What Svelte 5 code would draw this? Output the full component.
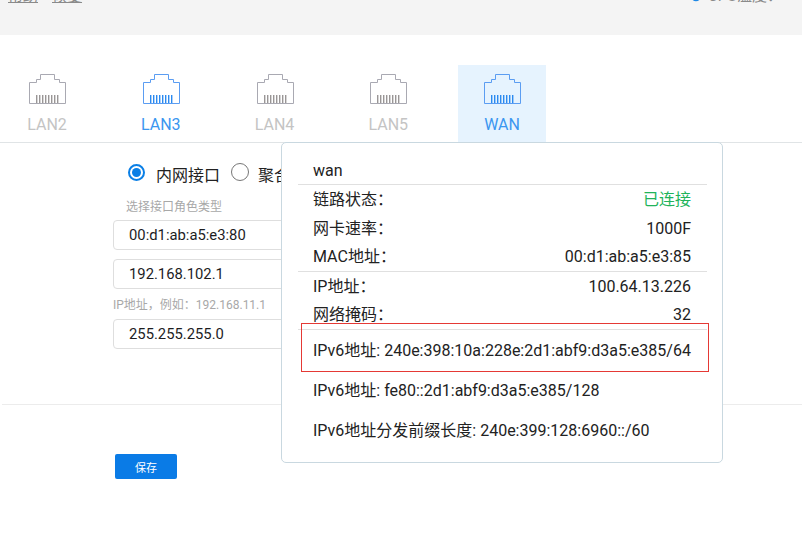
<script>
  const tabs = [
    { name: "LAN2", state: "off" },
    { name: "LAN3", state: "on" },
    { name: "LAN4", state: "off" },
    { name: "LAN5", state: "off" },
    { name: "WAN", state: "current" },
  ];
  const pins = [0, 1, 2, 3, 4, 5, 6, 7];
  const link = [
    { label: "链路状态：", value: "已连接", ok: true },
    { label: "网卡速率：", value: "1000F" },
    { label: "MAC地址：", value: "00:d1:ab:a5:e3:85" },
  ];
  const net = [
    { label: "IP地址：", value: "100.64.13.226" },
    { label: "网络掩码：", value: "32" },
  ];
</script>

<div class="page">
  <header class="top">
    <div class="links"><u>帮助</u><u>恢复</u></div>
    <div class="temp">
      <svg width="12" height="12" viewBox="0 0 12 12"><circle cx="6" cy="6" r="4.5" fill="none" stroke="#1e88e5" stroke-width="1.4" /><circle cx="6" cy="6" r="1.6" fill="#1e88e5" /></svg>
      <span>CPU温度：</span>
    </div>
  </header>

  <nav class="tabs">
    {#each tabs as t}
      <div class="tab {t.state}">
        <svg width="38" height="31" viewBox="0 0 38 31" fill="none">
          <path d="M1.5 30.5 V9.5 H8.5 V6.5 H12.5 V1.5 H26.5 V6.5 H31.5 V9.5 H37.5 V30.5 Z" class="outline" />
          {#each pins as p}
            <rect x={8 + p * 3} y="22" width="1.4" height="8" class="pin" />
          {/each}
        </svg>
        <span>{t.name}</span>
      </div>
    {/each}
  </nav>

  <section class="form">
    <div class="radios">
      <span class="radio checked"></span><span class="opt">内网接口</span>
      <span class="radio"></span><span class="opt">聚合接口</span>
    </div>
    <p class="hint role">选择接口角色类型</p>
    <div class="input">00:d1:ab:a5:e3:80</div>
    <div class="input second">192.168.102.1</div>
    <p class="hint ip">IP地址，例如：192.168.11.1</p>
    <div class="input">255.255.255.0</div>
  </section>

  <div class="actions">
    <button>保存</button>
  </div>

  <aside class="pop">
    <div class="title">wan</div>
    <div class="group">
      {#each link as r}
        <div class="row"><span>{r.label}</span><span class:ok={r.ok}>{r.value}</span></div>
      {/each}
    </div>
    <div class="group">
      {#each net as r}
        <div class="row"><span>{r.label}</span><span>{r.value}</span></div>
      {/each}
    </div>
    <div class="v6 mark">IPv6地址: 240e:398:10a:228e:2d1:abf9:d3a5:e385/64</div>
    <div class="v6">IPv6地址: fe80::2d1:abf9:d3a5:e385/128</div>
    <div class="v6">IPv6地址分发前缀长度: 240e:399:128:6960::/60</div>
  </aside>
</div>

<style>
  :global(body) {
    margin: 0;
    background: #fff;
  }
  .page {
    position: relative;
    width: 802px;
    height: 541px;
    overflow: hidden;
    font-family: Roboto, "Noto Sans CJK SC", sans-serif;
    color: #222;
  }
  .top {
    height: 35px;
    background: #f4f4f4;
    display: flex;
    justify-content: space-between;
    align-items: flex-start;
    font-size: 15px;
    line-height: 16px;
    color: #8a8a8a;
  }
  .links {
    display: flex;
    gap: 14px;
    margin: -12px 0 0 8px;
  }
  .temp {
    display: flex;
    align-items: center;
    gap: 6px;
    margin: -12px 0 0 0;
    width: 112px;
    white-space: nowrap;
  }
  .tabs {
    display: flex;
    gap: 25.75px;
    margin-top: 30px;
    padding-left: 3px;
    height: 77px;
    border-bottom: 1px solid #e0e4e6;
  }
  .tab {
    width: 88px;
    flex: none;
    display: flex;
    flex-direction: column;
    align-items: center;
    padding-top: 8px;
    box-sizing: border-box;
    color: #c4c4c4;
  }
  .tab svg {
    display: block;
    margin-bottom: 12px;
  }
  .tab span {
    line-height: 18px;
    font-size: 16px;
  }
  .outline {
    stroke: #a9a9b2;
    stroke-width: 1;
  }
  .pin {
    fill: #9a9696;
  }
  .on,
  .current {
    color: #3a96f0;
  }
  .current {
    background: #e6f3fe;
  }
  .on .outline,
  .current .outline {
    stroke: #5b9df2;
  }
  .on .pin,
  .current .pin {
    fill: #2b8af0;
  }
  .form {
    padding: 20px 0 0 113px;
    width: 300px;
  }
  .radios {
    display: flex;
    align-items: center;
    height: 20px;
    padding-left: 15px;
    white-space: nowrap;
  }
  .radio {
    width: 16px;
    height: 16px;
    border: 1px solid #777;
    border-radius: 50%;
    margin-top: -2px;
    flex: none;
  }
  .radio.checked {
    width: 9px;
    height: 9px;
    border: 2px solid #0a7fe6;
    padding: 2px;
    background: #0a7fe6;
    background-clip: content-box;
  }
  .opt {
    margin: 2px 11px 0 11px;
    font-size: 16px;
    color: #222;
  }
  .radio:not(.checked) + .opt {
    margin-left: 9px;
  }
  .hint {
    margin: 0;
    font-size: 12px;
    line-height: 16px;
    color: #a8a8a8;
  }
  .role {
    margin: 16px 0 5px 13px;
  }
  .ip {
    margin: 8px 0 6px;
  }
  .input {
    height: 28px;
    line-height: 28px;
    width: 300px;
    padding-left: 15px;
    border: 1px solid #dedede;
    border-radius: 4px;
    background: #fff;
    font-size: 14.8px;
    color: #1d1d1f;
  }
  .second {
    margin-top: 9px;
  }
  .actions {
    margin: 55px 0 0 2px;
    height: 49px;
    border-top: 1px solid #ececec;
    padding: 49px 0 0 113px;
  }
  button {
    display: block;
    width: 62px;
    height: 25px;
    border: 0;
    border-radius: 2px;
    background: #0a7be6;
    color: #fff;
    font: 11px "Noto Sans CJK SC", sans-serif;
    padding: 0;
  }
  .pop {
    position: absolute;
    left: 281px;
    top: 142px;
    width: 442px;
    height: 321px;
    box-sizing: border-box;
    background: #fff;
    border: 1px solid #c9d8e0;
    border-radius: 5px;
    padding: 15px 15px 0 16px;
    font-size: 16px;
    color: #222;
  }
  .title {
    height: 26px;
    line-height: 26px;
    padding-left: 15px;
    border-bottom: 1px solid #e0e0e0;
  }
  .group {
    border-bottom: 1px solid #e0e0e0;
    padding: 0 16px 0 15px;
  }
  .row {
    display: flex;
    justify-content: space-between;
    height: 28.5px;
    line-height: 30px;
    white-space: nowrap;
  }
  .ok {
    color: #21b35a;
  }
  .v6 {
    height: 40px;
    line-height: 40px;
    padding-left: 15px;
    white-space: nowrap;
  }
  .mark {
    position: relative;
    margin-top: 1px;
  }
  .mark::after {
    content: "";
    position: absolute;
    left: 3px;
    right: -2px;
    top: -8px;
    bottom: -1px;
    border: 1px solid #e53935;
    pointer-events: none;
  }
</style>
